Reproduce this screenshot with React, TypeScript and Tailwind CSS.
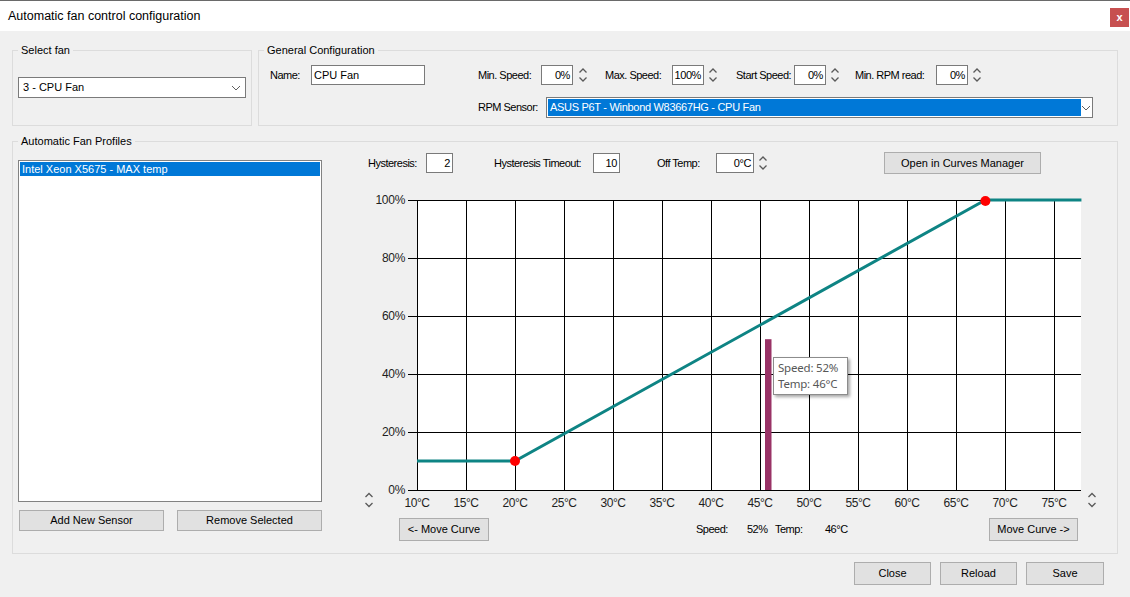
import React from "react";

const Spinner = ({ className = "" }: { className?: string }) => (
  <svg width="10" height="18" viewBox="0 0 10 18" className={className}>
    <path d="M1.5 6.5 L5 3 L8.5 6.5" fill="none" stroke="#5a5a5a" strokeWidth="1.3" />
    <path d="M1.5 11.5 L5 15 L8.5 11.5" fill="none" stroke="#5a5a5a" strokeWidth="1.3" />
  </svg>
);

const Chevron = ({ color = "#606060" }: { color?: string }) => (
  <svg width="10" height="6" viewBox="0 0 10 6">
    <path d="M1 1 L5 5 L9 1" fill="none" stroke={color} strokeWidth="1" />
  </svg>
);

const Button = ({ label, className = "" }: { label: string; className?: string }) => (
  <button className={`flex items-center justify-center bg-[#e1e1e1] border border-[#adadad] text-[11px] text-black whitespace-nowrap ${className}`}>
    {label}
  </button>
);

const NumInput = ({ value, className = "" }: { value: string; className?: string }) => (
  <div className={`h-[20px] bg-white border border-[#7a7a7a] flex items-center justify-end pr-[2px] tracking-[-0.4px] ${className}`}>
    {value}
  </div>
);

const Label = ({ text, className = "" }: { text: string; className?: string }) => (
  <span className={`whitespace-nowrap tracking-[-0.5px] ${className}`}>{text}</span>
);

const Group = ({ title, className = "", children }: { title: string; className?: string; children: React.ReactNode }) => (
  <fieldset className={`border border-[#dcdcdc] ${className}`}>
    <legend className="ml-[5px] px-[3px] leading-[14px] text-[11px]">{title}</legend>
    {children}
  </fieldset>
);

// chart geometry (svg coordinates)
const L = 77;
const T = 10;
const R = 741;
const B = 300;
const xPx = (t: number) => L + (t - 10) * 9.8;
const yPx = (p: number) => B - p * 2.9;

const temps = [10, 15, 20, 25, 30, 35, 40, 45, 50, 55, 60, 65, 70, 75];
const pcts = [0, 20, 40, 60, 80, 100];
const curve = [
  [10, 10],
  [20, 10],
  [68, 100],
  [77.8, 100],
];

const FanChart = () => {
  const points = curve.map(([t, p]) => `${xPx(t)},${yPx(p)}`).join(" ");
  return (
    <div className="relative w-[770px] h-[326px]">
      <svg width="770" height="326" viewBox="0 0 770 326" className="block">
        <rect x={L} y={T} width={R - L} height={B - T} fill="#ffffff" />
        {pcts.map((p) => (
          <g key={p}>
            <line x1={L - 9} x2={R} y1={yPx(p) + 0.5} y2={yPx(p) + 0.5} stroke="#000" strokeWidth="1" />
            <text
              x={L - 12}
              y={yPx(p) + 1}
              textAnchor="end"
              dominantBaseline="middle"
              fontFamily="'Liberation Sans', Arial, sans-serif"
              fontSize="12"
              letterSpacing="-0.3"
              fill="#1e1e1e"
            >
              {p}%
            </text>
          </g>
        ))}
        {temps.map((t) => (
          <g key={t}>
            <line x1={xPx(t) + 0.5} x2={xPx(t) + 0.5} y1={T} y2={B} stroke="#000" strokeWidth="1" />
            <text
              x={xPx(t)}
              y={B + 14}
              textAnchor="middle"
              dominantBaseline="middle"
              fontFamily="'Liberation Sans', Arial, sans-serif"
              fontSize="12"
              letterSpacing="-0.4"
              fill="#1e1e1e"
            >
              {t}°C
            </text>
          </g>
        ))}
        <rect x={425} y={yPx(52)} width={6.5} height={B - yPx(52)} fill="#993366" />
        <polyline points={points} fill="none" stroke="#0e8484" strokeWidth="3" />
        <circle cx={xPx(20)} cy={yPx(10)} r="5" fill="#ff0000" />
        <circle cx={xPx(68)} cy={yPx(100) + 1} r="5" fill="#ff0000" />
        <g transform="translate(24 301)">
          <path d="M1.5 6 L5 2.5 L8.5 6" fill="none" stroke="#5a5a5a" strokeWidth="1.3" />
          <path d="M1.5 12 L5 15.5 L8.5 12" fill="none" stroke="#5a5a5a" strokeWidth="1.3" />
        </g>
        <g transform="translate(747 301)">
          <path d="M1.5 6 L5 2.5 L8.5 6" fill="none" stroke="#5a5a5a" strokeWidth="1.3" />
          <path d="M1.5 12 L5 15.5 L8.5 12" fill="none" stroke="#5a5a5a" strokeWidth="1.3" />
        </g>
      </svg>
      <div className="absolute left-[433px] top-[167px] w-[75px] h-[38px] bg-white border border-[#8c8c8c] shadow-[2px_2px_3px_rgba(0,0,0,0.35)] pl-[4px] pt-[2px] whitespace-nowrap font-['Noto_Sans',sans-serif] text-[11.5px] leading-[16px] tracking-[-0.2px] text-[#575757]">
        <div>Speed: 52%</div>
        <div>Temp: 46°C</div>
      </div>
    </div>
  );
};

export default function App() {
  return (
    <div className="w-[1130px] h-[597px] bg-[#f0f0f0] overflow-hidden font-['Liberation_Sans',Arial,sans-serif] text-[11px] text-black">
      {/* title bar */}
      <div className="h-[31px] bg-white border-t border-[#6a6a6a] flex items-start justify-between pl-[8px] pr-[1px]">
        <div className="mt-[6px] text-[12.5px] leading-[18px]">Automatic fan control configuration</div>
        <div className="mt-[7px] w-[19px] h-[19px] bg-[#c75050] flex items-center justify-center text-white text-[11px] font-bold leading-none">
          x
        </div>
      </div>

      <div className="px-[12px]">
        {/* top row */}
        <div className="flex gap-[6px] mt-[12px]">
          <Group title="Select fan" className="w-[240px] h-[83px]">
            <div className="ml-[5px] mt-[20px] w-[228px] h-[21px] bg-white border border-[#7a7a7a] flex items-center justify-between pl-[4px] pr-[4px]">
              <span>3 - CPU Fan</span>
              <Chevron />
            </div>
          </Group>

          <Group title="General Configuration" className="w-[860px] h-[83px]">
            <div className="flex pl-[11px] pt-[8px]">
              <div className="flex items-center h-[20px]">
                <Label text="Name:" className="w-[41px]" />
                <div className="w-[114px] h-[20px] bg-white border border-[#7a7a7a] flex items-center pl-[2px]">CPU Fan</div>
              </div>
              <div className="ml-[53px] flex flex-col">
                <div className="flex items-center h-[20px]">
                  <Label text="Min. Speed:" className="w-[63px]" />
                  <NumInput value="0%" className="w-[32px]" />
                  <div className="w-[32px] pl-[5px]"><Spinner /></div>
                  <Label text="Max. Speed:" className="w-[67px]" />
                  <NumInput value="100%" className="w-[32px]" />
                  <div className="w-[32px] pl-[4px]"><Spinner /></div>
                  <Label text="Start Speed:" className="w-[58px]" />
                  <NumInput value="0%" className="w-[32px]" />
                  <div className="w-[29px] pl-[4px]"><Spinner /></div>
                  <Label text="Min. RPM read:" className="w-[81px]" />
                  <NumInput value="0%" className="w-[32px]" />
                  <div className="pl-[4px]"><Spinner /></div>
                </div>
                <div className="flex items-center h-[21px] mt-[12px]">
                  <Label text="RPM Sensor:" className="w-[68px]" />
                  <div className="w-[547px] h-[21px] bg-white border border-[#7a7a7a] flex items-center p-[1px]">
                    <div className="w-[534px] h-full bg-[#0078d7] text-white flex items-center pl-[2px] tracking-[-0.3px]">
                      ASUS P6T - Winbond W83667HG - CPU Fan
                    </div>
                    <div className="flex-1 flex justify-center"><Chevron /></div>
                  </div>
                </div>
              </div>
            </div>
          </Group>
        </div>

        {/* profiles */}
        <Group title="Automatic Fan Profiles" className="mt-[8px] w-[1106px] h-[420px]">
          <div className="flex">
            <div className="ml-[5px] pt-[12px] w-[304px] flex flex-col">
              <div className="h-[342px] bg-white border border-[#828282] p-[1px]">
                <div className="h-[14px] bg-[#0078d7] text-white leading-[14px] pl-[2px]">Intel Xeon X5675 - MAX temp</div>
              </div>
              <div className="flex justify-between mt-[8px] pl-[1px]">
                <Button label="Add New Sensor" className="w-[145px] h-[21px]" />
                <Button label="Remove Selected" className="w-[145px] h-[21px]" />
              </div>
            </div>

            <div className="flex-1 pt-[4px] flex flex-col">
              <div className="flex items-center h-[22px]">
                <Label text="Hysteresis:" className="ml-[46px] w-[58px]" />
                <NumInput value="2" className="w-[27px]" />
                <Label text="Hysteresis Timeout:" className="ml-[41px] w-[99px]" />
                <NumInput value="10" className="w-[27px]" />
                <Label text="Off Temp:" className="ml-[37px] w-[59px]" />
                <NumInput value="0°C" className="w-[38px]" />
                <div className="ml-[4px]"><Spinner /></div>
                <Button label="Open in Curves Manager" className="ml-[116px] w-[157px] h-[22px]" />
              </div>

              <div className="mt-[16px] ml-[18px]">
                <FanChart />
              </div>

              <div className="mt-[2px] flex items-center h-[23px]">
                <Button label="<- Move Curve" className="ml-[77px] w-[90px] h-[23px]" />
                <Label text="Speed:" className="ml-[207px] w-[51px]" />
                <Label text="52%" className="w-[28px]" />
                <Label text="Temp:" className="w-[50px]" />
                <Label text="46°C" className="w-[164px]" />
                <Button label="Move Curve ->" className="w-[89px] h-[23px]" />
              </div>
            </div>
          </div>
        </Group>

        {/* dialog buttons */}
        <div className="flex justify-end gap-[9px] mt-[8px] pr-[14px]">
          <Button label="Close" className="w-[77px] h-[23px]" />
          <Button label="Reload" className="w-[77px] h-[23px]" />
          <Button label="Save" className="w-[78px] h-[23px]" />
        </div>
      </div>
    </div>
  );
}
